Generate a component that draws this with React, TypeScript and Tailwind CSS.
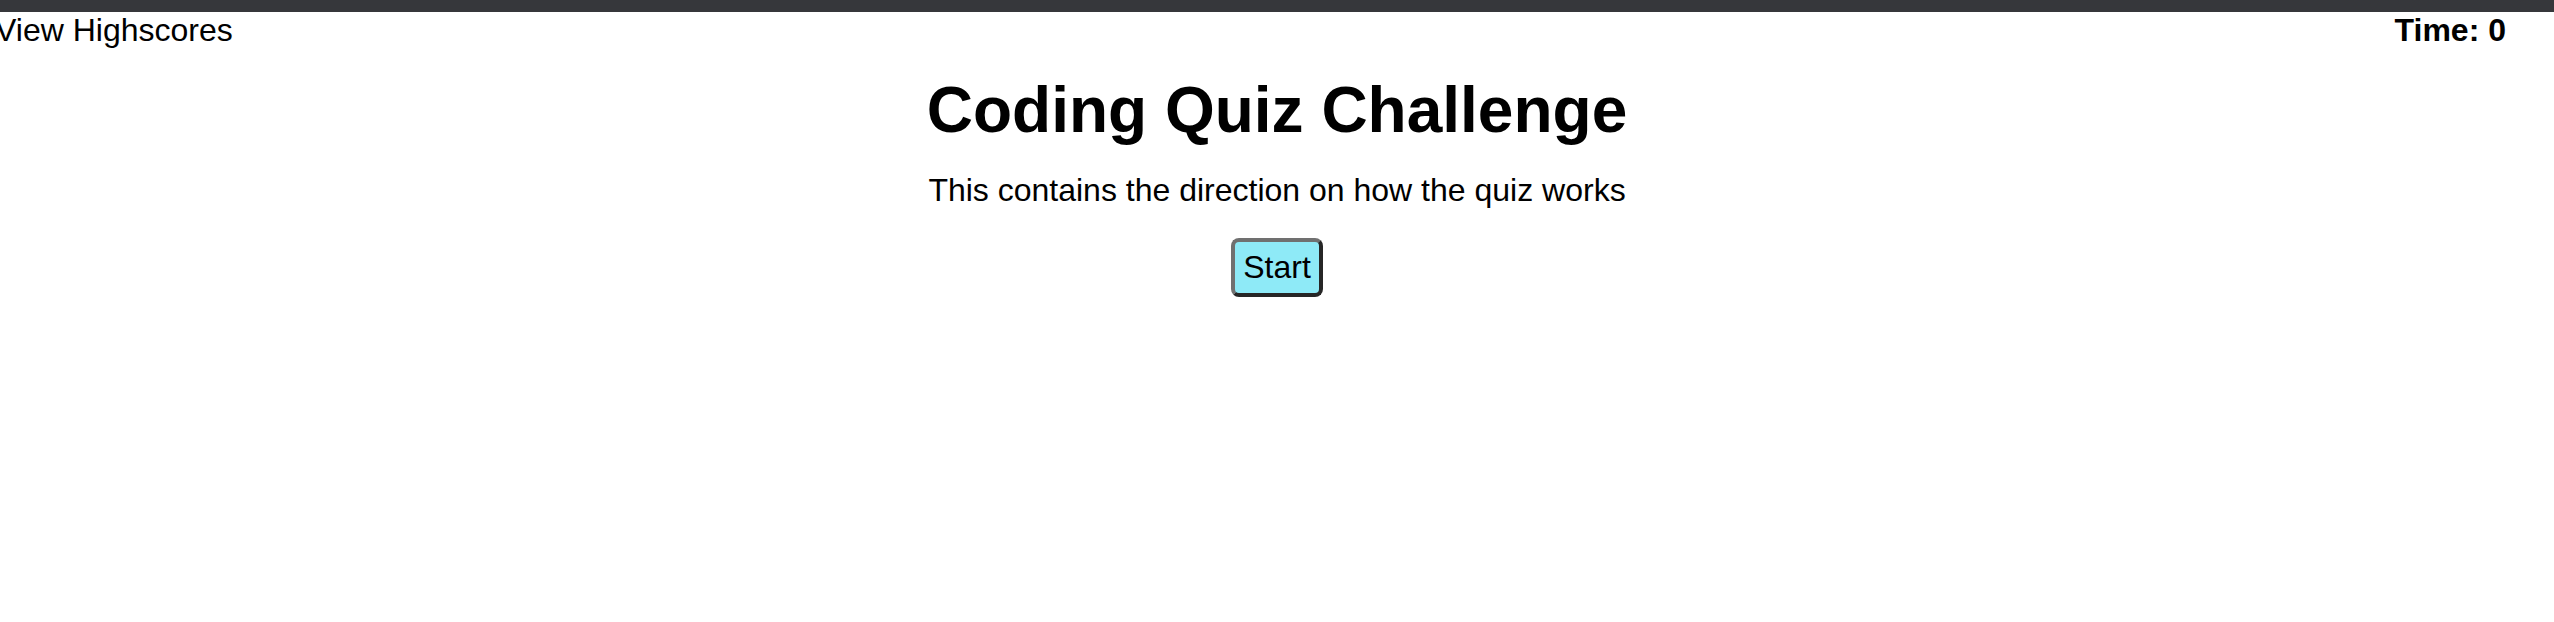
export default function App() {
  return (
    <div className="min-h-screen bg-white text-black font-['Liberation_Sans',Arial,sans-serif]">
      {/* window top strip */}
      <div className="h-[12px] bg-[#36373b]" />

      <header className="flex justify-between items-start ml-[-5px] pr-[48px] text-[32px] leading-[36px]">
        <a className="cursor-pointer">View Highscores</a>
        <div className="font-bold">Time: 0</div>
      </header>

      <main className="flex flex-col items-center">
        <h1 className="mt-[26px] text-[64px] leading-[72px] font-bold">Coding Quiz Challenge</h1>
        <p className="mt-[26px] text-[32px] leading-[36px]">
          This contains the direction on how the quiz works
        </p>
        <button className="mt-[30px] px-[8px] py-[7px] text-[32px] leading-[37px] bg-[#8eeaf7] rounded-[8px] border-4 border-t-[#707070] border-l-[#707070] border-b-[#262626] border-r-[#262626]">
          Start
        </button>
      </main>
    </div>
  );
}
